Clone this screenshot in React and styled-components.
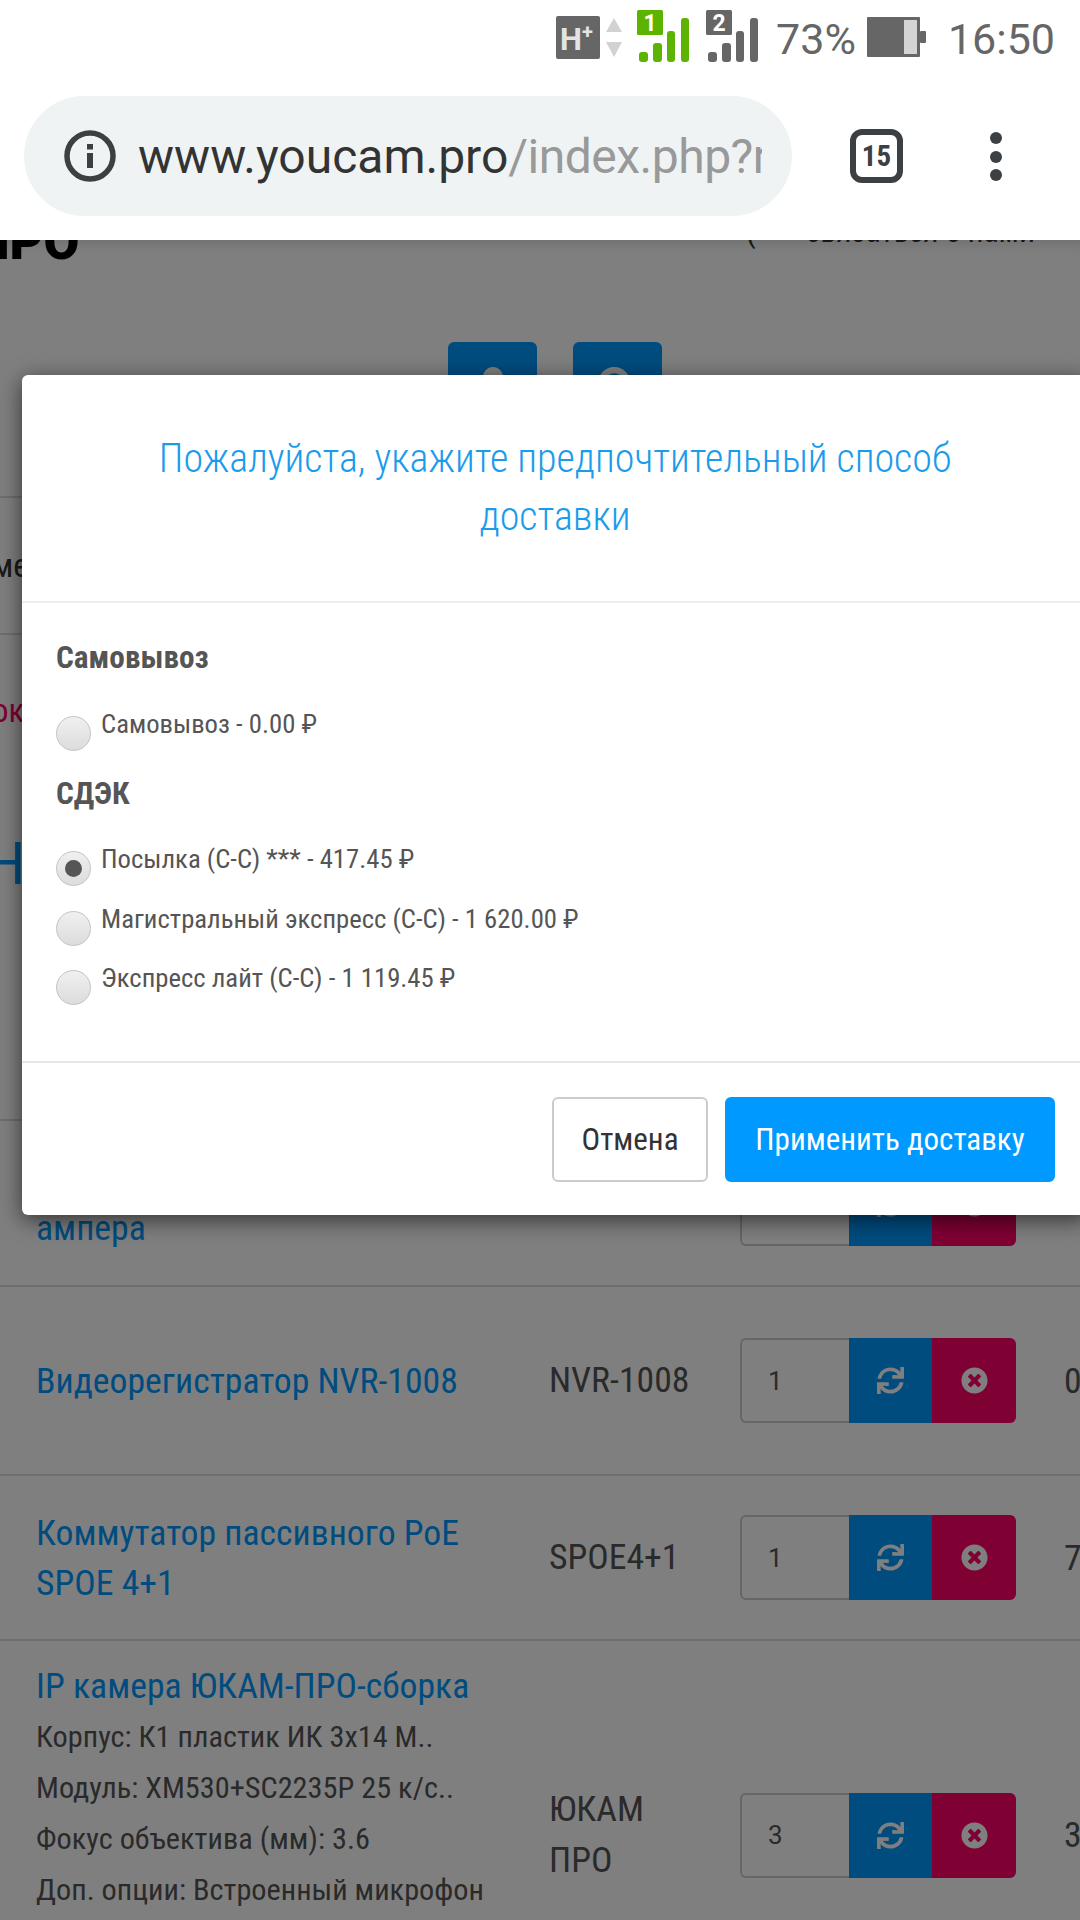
import React from 'react'
import styled, { createGlobalStyle } from 'styled-components'
import { FaSync, FaTimesCircle, FaUser, FaSearch } from 'react-icons/fa'

const GlobalStyle = createGlobalStyle`
  html, body { margin: 0; padding: 0; background: #fff; }
  * { box-sizing: border-box; }
  body { font-family: "Roboto Condensed", Roboto, "Liberation Sans", sans-serif; font-stretch: 75%; }
`

const Screen = styled.div`
  width: 1080px;
  height: 1920px;
  overflow: hidden;
  display: flex;
  flex-direction: column;
  background: #fff;
`
const StatusBar = styled.div`
  height: 72px;
  flex: none;
  display: flex;
  align-items: center;
  justify-content: flex-end;
  padding: 2px 25px 0 0;
  color: #666;
  font-family: Roboto, sans-serif;
  font-stretch: 100%;
  font-size: 43px;
`
const StatusItem = styled.span`
  margin-left: ${p => p.$left}px;
  line-height: 1;
  padding-top: ${p => p.$top || 0}px;
`
const Toolbar = styled.div`
  height: 168px;
  flex: none;
  display: flex;
  align-items: flex-start;
  padding: 24px 0 0 24px;
  position: relative;
  z-index: 8;
  background: #fff;
`
const UrlPill = styled.div`
  width: 768px;
  height: 120px;
  border-radius: 60px;
  background: #eff3f3;
  display: flex;
  align-items: center;
  padding-left: 40px;
  flex: none;
`
const UrlText = styled.div`
  margin-left: 22px;
  width: 624px;
  overflow: hidden;
  white-space: nowrap;
  font-family: Roboto, sans-serif;
  font-stretch: 100%;
  font-size: 48px;
  color: #333;
  span { color: #999; letter-spacing: -0.5px; }
`
const TabCount = styled.div`
  width: 53px;
  height: 54px;
  margin: 33px 0 0 58px;
  border: 6px solid #3c4043;
  border-radius: 12px;
  display: flex;
  align-items: center;
  justify-content: center;
  font-family: Roboto, sans-serif;
  font-stretch: 75%;
  font-weight: 700;
  font-size: 29px;
  color: #3c4043;
  flex: none;
`
const MenuDots = styled.div`
  margin: 36px 0 0 87px;
  display: flex;
  flex-direction: column;
  gap: 6.5px;
  i {
    display: block;
    width: 12px;
    height: 12px;
    border-radius: 50%;
    background: #3c4043;
  }
`

const Page = styled.div`
  flex: 1;
  position: relative;
  overflow: hidden;
  color: #555;
  font-size: 35.7px;
`
const Overlay = styled.div`
  position: absolute;
  inset: 0;
  z-index: 4;
  background: rgba(0, 0, 0, 0.5);
  box-shadow: inset 0 14px 12px -10px rgba(0, 0, 0, 0.12);
`
const TopBar = styled.div`
  height: 102px;
  display: flex;
  justify-content: space-between;
  overflow: hidden;
`
const Logo = styled.div`
  margin: -24px 0 0 -27px;
  font-family: Roboto, sans-serif;
  font-stretch: 100%;
  font-weight: 900;
  font-size: 52px;
  line-height: 52px;
  color: #000;
`
const Contact = styled.div`
  margin: -23px 45px 0 0;
  font-size: 31.5px;
  line-height: 30px;
  color: #333;
  span { margin-right: 50px; }
`
const IconRow = styled.div`
  height: 156px;
  display: flex;
  justify-content: center;
  gap: 36px;
  padding-left: 30px;
  border-bottom: 2px solid #ddd;
`
const IconTile = styled.div`
  width: 89px;
  height: 89px;
  border-radius: 6px;
  background: #0099ff;
  color: #fff;
  display: flex;
  align-items: center;
  justify-content: center;
  font-size: 40px;
`
const Band = styled.div`
  height: ${p => p.$height}px;
  display: flex;
  align-items: center;
  overflow: hidden;
  white-space: nowrap;
  border-bottom: ${p => (p.$line ? '2px solid #ddd' : 'none')};
  color: ${p => p.$color || '#333'};
  font-size: ${p => p.$size || 33}px;
  font-weight: ${p => p.$weight || 400};
`
const Clipped = styled.span`
  margin-left: ${p => p.$left}px;
`
const CartRow = styled.div`
  height: ${p => p.$height}px;
  display: grid;
  grid-template-columns: 513px 191px 324px auto;
  align-items: center;
  padding-left: 36px;
  border-bottom: 2px solid #ddd;
  white-space: nowrap;
`
const NameCell = styled.div`
  align-self: ${p => (p.$top ? 'start' : 'center')};
  padding-top: ${p => (p.$top ? 20 : 0)}px;
`
const ProductLink = styled.div`
  color: #0099ff;
  line-height: 50px;
`
const Option = styled.div`
  font-size: 30.3px;
  line-height: 51px;
  color: #555;
`
const CodeCell = styled.div`
  line-height: 51px;
  color: #555;
`
const PriceCell = styled.div`
  color: #555;
`
const QtyGroup = styled.div`
  display: flex;
  height: 85px;
  width: 276px;
`
const QtyInput = styled.div`
  width: 109px;
  border: 2px solid #ccc;
  border-right: none;
  border-radius: 6px 0 0 6px;
  display: flex;
  align-items: center;
  padding-left: 26px;
  font-family: Roboto, sans-serif;
  font-stretch: 100%;
  font-size: 26px;
  color: #555;
`
const QtyButton = styled.div`
  width: ${p => p.$width}px;
  background: ${p => p.$bg};
  border-radius: ${p => p.$radius || 0};
  display: flex;
  align-items: center;
  justify-content: center;
  color: #fff;
  font-size: 27px;
`

const Modal = styled.div`
  position: absolute;
  z-index: 6;
  left: 22px;
  top: 135px;
  width: 1066px;
  height: 840px;
  background: #fff;
  border-radius: 6px;
  box-shadow: 0 5px 22px rgba(0, 0, 0, 0.6);
  display: flex;
  flex-direction: column;
`
const ModalHeader = styled.div`
  flex: none;
  height: 228px;
  padding: 55px 33px 0;
  border-bottom: 2px solid #eee;
  text-align: center;
  color: #1a9bec;
  font-weight: 300;
  font-size: 40px;
  line-height: 58px;
`
const ModalBody = styled.div`
  flex: 1;
  padding: 35px 34px 0;
  border-bottom: 2px solid #e6e6e6;
`
const GroupTitle = styled.div`
  font-weight: 700;
  font-size: 31.3px;
  line-height: 40px;
  color: #555;
  margin-top: ${p => p.$above || 0}px;
  margin-bottom: ${p => p.$gap}px;
`
const ShipOption = styled.label`
  display: flex;
  align-items: flex-start;
  gap: 10px;
  height: 59.5px;
  font-size: 26.7px;
  line-height: 35px;
  color: #555;
`
const Radio = styled.span`
  flex: none;
  width: 35px;
  height: 35px;
  margin-top: 9px;
  border-radius: 50%;
  border: 1px solid #c4c4c4;
  background: linear-gradient(#f0f0f0, #dcdcdc);
  display: flex;
  align-items: center;
  justify-content: center;
  &::after {
    content: '';
    display: ${p => (p.$checked ? 'block' : 'none')};
    width: 17px;
    height: 17px;
    border-radius: 50%;
    background: #555;
  }
`
const ModalFooter = styled.div`
  flex: none;
  height: 152px;
  padding: 34px 33px 0 0;
  display: flex;
  justify-content: flex-end;
  gap: 17px;
`
const FooterButton = styled.div`
  height: 85px;
  width: ${p => p.$width}px;
  border-radius: 6px;
  display: flex;
  align-items: center;
  justify-content: center;
  font-size: 31px;
  color: ${p => (p.$primary ? '#fff' : '#333')};
  background: ${p => (p.$primary ? '#0099ff' : '#fff')};
  border: 2px solid ${p => (p.$primary ? '#0099ff' : '#ccc')};
`

const Signal = ({ fill, flag, label }) => (
  <svg width="54" height="54" viewBox="0 0 54 54" style={{ display: 'block' }}>
    <rect x="0" y="0" width="26" height="25" rx="1.5" fill={flag} />
    <text x="13" y="21" textAnchor="middle" fontFamily="Roboto, sans-serif" fontWeight="700" fontSize="23" fill="#fff">{label}</text>
    <rect x="2" y="42" width="9" height="10" rx="3" fill={fill} />
    <rect x="16" y="33" width="9" height="19" rx="3" fill={fill} />
    <rect x="30" y="21" width="8" height="31" rx="3" fill={fill} />
    <rect x="44" y="8" width="8" height="44" rx="3" fill={fill} />
  </svg>
)

const NetworkBadge = () => (
  <svg width="68" height="46" viewBox="0 0 68 46" style={{ display: 'block' }}>
    <rect x="0" y="2" width="44" height="43" rx="2" fill="#666" />
    <text x="4" y="36" fontFamily="Roboto, sans-serif" fontWeight="700" fontSize="31" fill="#e4e4e4">H</text>
    <text x="26" y="25" fontFamily="Roboto, sans-serif" fontWeight="700" fontSize="20" fill="#e4e4e4">+</text>
    <path d="M58 4 L66 18 H50 Z" fill="#d2d2d2" />
    <path d="M58 43 L66 28 H50 Z" fill="#d2d2d2" />
  </svg>
)

const Battery = () => (
  <svg width="59" height="42" viewBox="0 0 59 42" style={{ display: 'block' }}>
    <rect x="0" y="1" width="53" height="40" rx="1" fill="#666" />
    <rect x="37" y="4" width="13" height="34" fill="#d4d4d4" />
    <rect x="53" y="15" width="6" height="12" rx="1" fill="#666" />
  </svg>
)

const InfoIcon = () => (
  <svg width="52" height="52" viewBox="0 0 52 52" style={{ display: 'block', flex: 'none' }}>
    <circle cx="26" cy="26" r="23" fill="none" stroke="#3c4043" strokeWidth="5.5" />
    <rect x="23" y="14" width="6" height="5.5" fill="#3c4043" />
    <rect x="23" y="23" width="6" height="15" fill="#3c4043" />
  </svg>
)

const options = ['Корпус: К1 пластик ИК 3х14 М..', 'Модуль: XM530+SC2235P 25 к/с..', 'Фокус объектива (мм): 3.6', 'Доп. опции: Встроенный микрофон']

const Qty = ({ value }) => (
  <QtyGroup>
    <QtyInput>{value}</QtyInput>
    <QtyButton $width={83} $bg="#0099ff"><FaSync /></QtyButton>
    <QtyButton $width={84} $bg="#ff0066" $radius="0 6px 6px 0"><FaTimesCircle /></QtyButton>
  </QtyGroup>
)

export default function App() {
  return (
    <Screen>
      <GlobalStyle />
      <StatusBar>
        <StatusItem $left={0}><NetworkBadge /></StatusItem>
        <StatusItem $left={13}><Signal fill="#5cb400" flag="#5cb400" label="1" /></StatusItem>
        <StatusItem $left={15}><Signal fill="#666" flag="#666" label="2" /></StatusItem>
        <StatusItem $left={16} $top={5}>73%</StatusItem>
        <StatusItem $left={11}><Battery /></StatusItem>
        <StatusItem $left={22} $top={5}>16:50</StatusItem>
      </StatusBar>
      <Toolbar>
        <UrlPill>
          <InfoIcon />
          <UrlText>www.youcam.pro<span>/index.php?route=checkout</span></UrlText>
        </UrlPill>
        <TabCount>15</TabCount>
        <MenuDots><i /><i /><i /></MenuDots>
      </Toolbar>
      <Page>
        <TopBar>
          <Logo>ПРО</Logo>
          <Contact><span>(</span>связаться с нами</Contact>
        </TopBar>
        <IconRow>
          <IconTile><FaUser /></IconTile>
          <IconTile><FaSearch /></IconTile>
        </IconRow>
        <Band $height={137} $line><Clipped $left={-8}>ме</Clipped></Band>
        <Band $height={150} $color="#ff0066"><Clipped $left={-8}>ок</Clipped></Band>
        <Band $height={157} $color="#0099ff" $size={60}><Clipped $left={-12}>Н</Clipped></Band>
        <Band $height={179} $line />
        <CartRow $height={166}>
          <NameCell><ProductLink>Блок питания 12В 5<br />ампера</ProductLink></NameCell>
          <CodeCell>12V5A</CodeCell>
          <Qty value="1" />
          <PriceCell>1</PriceCell>
        </CartRow>
        <CartRow $height={189}>
          <NameCell><ProductLink>Видеорегистратор NVR-1008</ProductLink></NameCell>
          <CodeCell>NVR-1008</CodeCell>
          <Qty value="1" />
          <PriceCell>0</PriceCell>
        </CartRow>
        <CartRow $height={165}>
          <NameCell><ProductLink>Коммутатор пассивного PoE<br />SPOE 4+1</ProductLink></NameCell>
          <CodeCell>SPOE4+1</CodeCell>
          <Qty value="1" />
          <PriceCell>7</PriceCell>
        </CartRow>
        <CartRow $height={390}>
          <NameCell $top>
            <ProductLink>IP камера ЮКАМ-ПРО-сборка</ProductLink>
            {options.map(o => <Option key={o}>{o}</Option>)}
          </NameCell>
          <CodeCell>ЮКАМ<br />ПРО</CodeCell>
          <Qty value="3" />
          <PriceCell>3</PriceCell>
        </CartRow>
        <Overlay />
        <Modal>
          <ModalHeader>Пожалуйста, укажите предпочтительный способ<br />доставки</ModalHeader>
          <ModalBody>
            <GroupTitle $gap={29}>Самовывоз</GroupTitle>
            <ShipOption><Radio />Самовывоз - 0.00 ₽</ShipOption>
            <GroupTitle $above={7} $gap={28.5}>СДЭК</GroupTitle>
            <ShipOption><Radio $checked />Посылка (С-С) *** - 417.45 ₽</ShipOption>
            <ShipOption><Radio />Магистральный экспресс (С-С) - 1 620.00 ₽</ShipOption>
            <ShipOption><Radio />Экспресс лайт (С-С) - 1 119.45 ₽</ShipOption>
          </ModalBody>
          <ModalFooter>
            <FooterButton $width={156}>Отмена</FooterButton>
            <FooterButton $width={330} $primary>Применить доставку</FooterButton>
          </ModalFooter>
        </Modal>
      </Page>
    </Screen>
  )
}
